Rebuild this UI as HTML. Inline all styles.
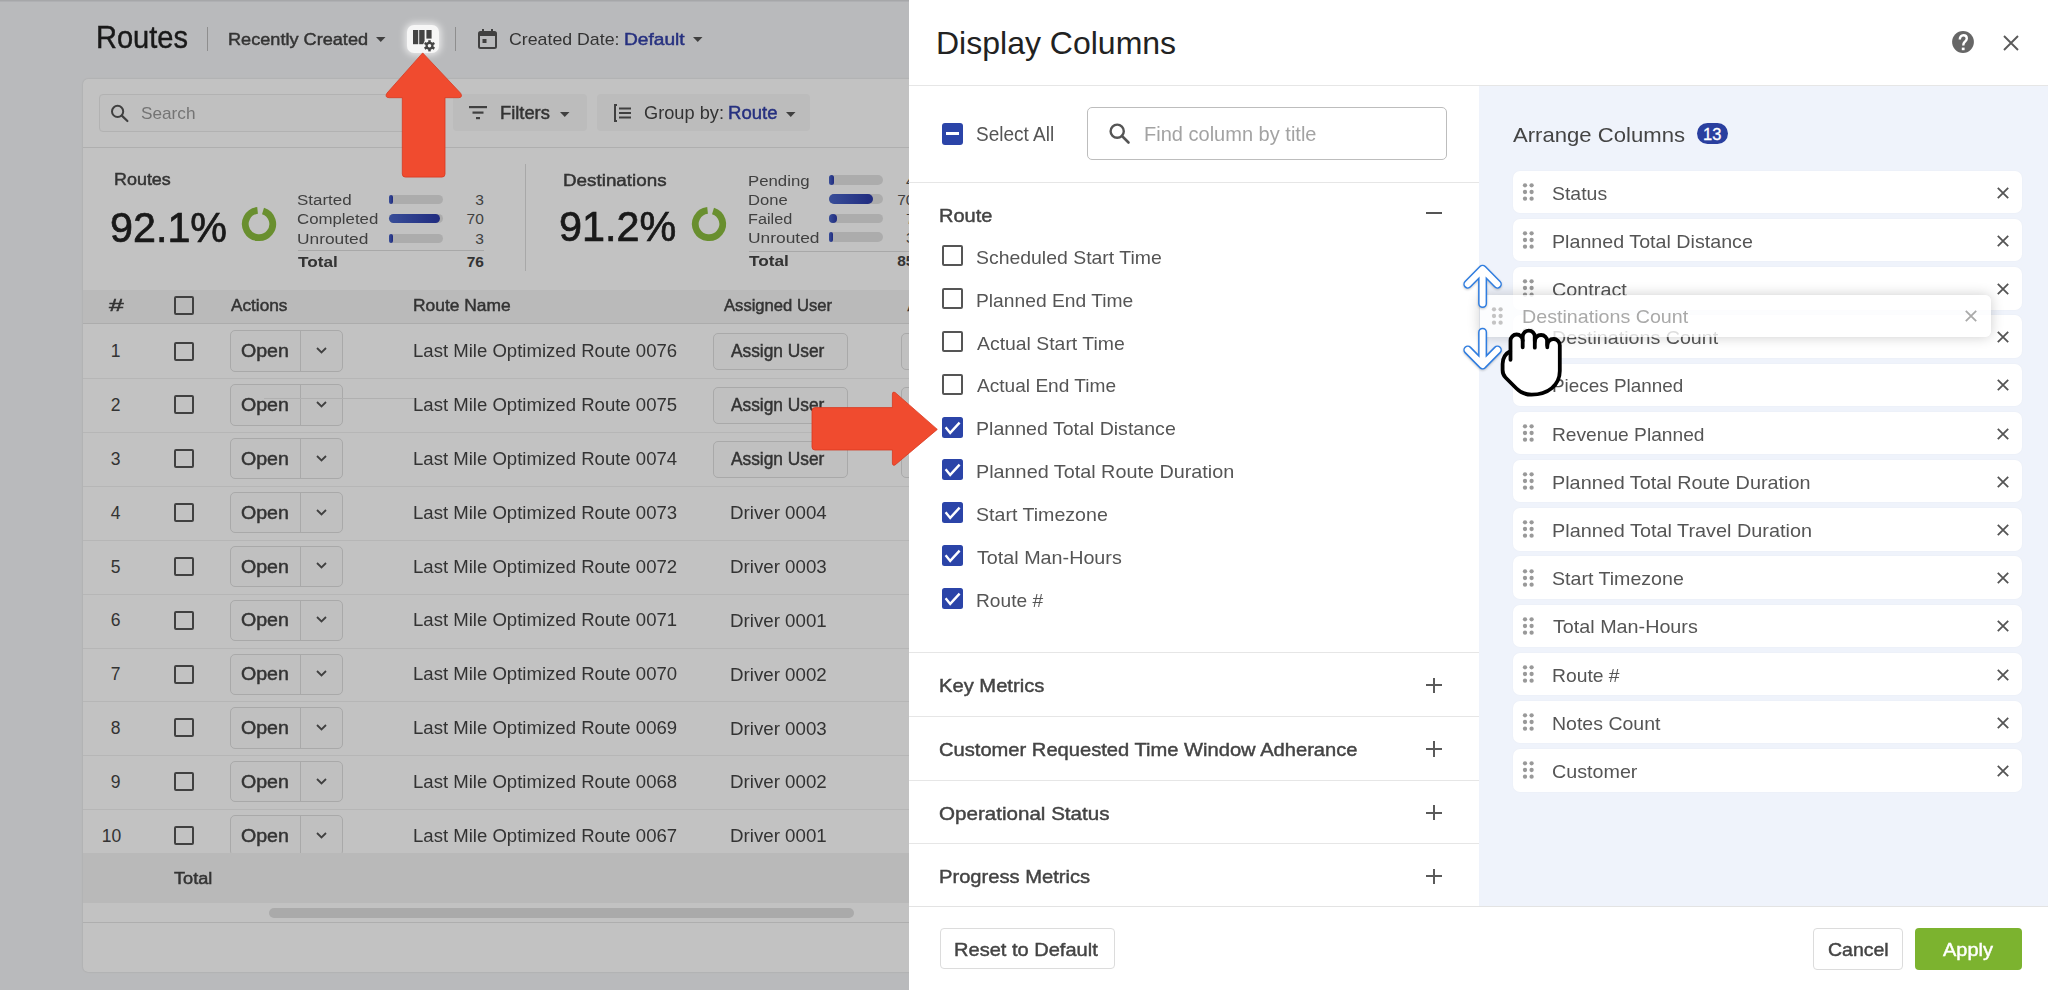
<!DOCTYPE html>
<html><head><meta charset="utf-8"><style>
html,body{margin:0;padding:0;width:2048px;height:990px;overflow:hidden;background:#fff}
body{position:relative;font-family:"Liberation Sans",sans-serif}
.t{position:absolute;white-space:pre;line-height:1;font-family:"Liberation Sans",sans-serif}
</style></head><body>
<div style="position:absolute;left:0.00px;top:0.00px;width:909.00px;height:990.00px;background:#f4f5f7"></div>
<div style="position:absolute;left:0.00px;top:0.00px;width:909.00px;height:2.00px;background:linear-gradient(#d5d6d9,#eceef1)"></div>
<div class="t" style="left:95.60px;top:22.18px;font-size:30.5px;color:#222;font-weight:400;transform:scaleX(0.9521);transform-origin:left 50%;-webkit-text-stroke:0.4px #222;">Routes</div>
<div style="position:absolute;left:207.00px;top:27.00px;width:1.00px;height:24.00px;background:#bbb"></div>
<div class="t" style="left:227.73px;top:30.91px;font-size:17px;color:#444;-webkit-text-stroke:0.45px #444;transform:scaleX(1.0662);transform-origin:left 50%;">Recently Created</div>
<svg style="position:absolute;left:376.00px;top:37.00px;overflow:visible;" width="10" height="5" viewBox="0 0 10 5"><path d="M0 0 L9.5 0 L4.75 5 Z" fill="#555"/></svg>
<div style="position:absolute;left:455.00px;top:27.00px;width:1.00px;height:24.00px;background:#bbb"></div>
<svg style="position:absolute;left:478.00px;top:27.50px;overflow:visible;" width="19" height="21" viewBox="0 0 19 21"><rect x="1" y="4" width="17" height="16" rx="1.5" fill="none" stroke="#555" stroke-width="2"/><rect x="1" y="4" width="17" height="4" fill="#555"/><rect x="4" y="1" width="2" height="4" fill="#555"/><rect x="13" y="1" width="2" height="4" fill="#555"/><rect x="4.5" y="11" width="4" height="4" fill="#555"/></svg>
<div class="t" style="left:509.46px;top:31.11px;font-size:17px;color:#444;font-weight:400;transform:scaleX(1.0437);transform-origin:left 50%;">Created Date:</div>
<div class="t" style="left:623.87px;top:31.11px;font-size:17px;color:#3340a8;-webkit-text-stroke:0.45px #3340a8;transform:scaleX(1.1264);transform-origin:left 50%;">Default</div>
<svg style="position:absolute;left:692.50px;top:37.00px;overflow:visible;" width="10" height="5" viewBox="0 0 10 5"><path d="M0 0 L9.5 0 L4.75 5 Z" fill="#555"/></svg>
<div style="position:absolute;left:83.00px;top:79.00px;width:900.00px;height:893.00px;background:#fff;border-radius:5px;box-shadow:0 0 2px rgba(0,0,0,0.15)"></div>
<div style="position:absolute;left:99.00px;top:93.50px;width:346.00px;height:38.50px;background:#fdfdfd;border:1px solid #eaeaea;border-radius:4px;box-sizing:border-box"></div>
<svg style="position:absolute;left:110.00px;top:104.00px;overflow:visible;" width="20" height="18" viewBox="0 0 20 18"><circle cx="7.6" cy="7.4" r="5.6" fill="none" stroke="#555" stroke-width="2"/><path d="M11.8 11.6 L17.4 17" stroke="#555" stroke-width="2.2" stroke-linecap="round"/></svg>
<div class="t" style="left:141.39px;top:104.81px;font-size:17px;color:#999;font-weight:400;transform:scaleX(1.0115);transform-origin:left 50%;">Search</div>
<div style="position:absolute;left:453.00px;top:94.00px;width:134.00px;height:37.00px;background:#f8f8f8;border-radius:4px"></div>
<svg style="position:absolute;left:469.00px;top:106.00px;overflow:visible;" width="19" height="14" viewBox="0 0 19 14"><rect x="0" y="0" width="18" height="2.2" fill="#555"/><rect x="3.5" y="5.5" width="11" height="2.2" fill="#555"/><rect x="7" y="11" width="4" height="2.2" fill="#555"/></svg>
<div class="t" style="left:500.25px;top:104.99px;font-size:17.5px;color:#444;-webkit-text-stroke:0.45px #444;transform:scaleX(1.0468);transform-origin:left 50%;">Filters</div>
<svg style="position:absolute;left:559.50px;top:111.50px;overflow:visible;" width="10" height="5" viewBox="0 0 10 5"><path d="M0 0 L9.5 0 L4.75 5 Z" fill="#555"/></svg>
<div style="position:absolute;left:597.00px;top:94.00px;width:213.00px;height:37.00px;background:#f8f8f8;border-radius:4px"></div>
<svg style="position:absolute;left:613.50px;top:103.50px;overflow:visible;" width="18" height="18" viewBox="0 0 18 18"><path d="M3 1 L1 1 L1 17 L3 17" fill="none" stroke="#555" stroke-width="2"/><rect x="5" y="3.5" width="12" height="2" fill="#555"/><rect x="5" y="8" width="12" height="2" fill="#555"/><rect x="5" y="12.5" width="12" height="2" fill="#555"/></svg>
<div class="t" style="left:644.26px;top:104.99px;font-size:17.5px;color:#444;font-weight:400;transform:scaleX(1.0405);transform-origin:left 50%;">Group by:</div>
<div class="t" style="left:727.94px;top:104.99px;font-size:17.5px;color:#3340a8;-webkit-text-stroke:0.45px #3340a8;transform:scaleX(1.0600);transform-origin:left 50%;">Route</div>
<svg style="position:absolute;left:785.50px;top:111.50px;overflow:visible;" width="10" height="5" viewBox="0 0 10 5"><path d="M0 0 L9.5 0 L4.75 5 Z" fill="#555"/></svg>
<div style="position:absolute;left:83.00px;top:147.00px;width:826.00px;height:1.00px;background:#e6e6e6"></div>
<div class="t" style="left:113.51px;top:171.03px;font-size:16.5px;color:#444;-webkit-text-stroke:0.45px #444;transform:scaleX(1.0863);transform-origin:left 50%;">Routes</div>
<div class="t" style="left:109.83px;top:206.85px;font-size:42px;color:#222;font-weight:400;transform:scaleX(0.9828);transform-origin:left 50%;-webkit-text-stroke:0.7px #222;">92.1%</div>
<svg style="position:absolute;left:239.30px;top:204.30px;overflow:visible;" width="40" height="40" viewBox="0 0 40 40"><path d="M24.01 6.90 A13.7 13.7 0 1 1 18.57 6.38" fill="none" stroke="#8bbd3f" stroke-width="6.8"/></svg>
<div class="t" style="left:296.91px;top:191.88px;font-size:15.5px;color:#555;font-weight:400;transform:scaleX(1.0938);transform-origin:left 50%;">Started</div>
<div style="position:absolute;left:389.00px;top:194.80px;width:53.60px;height:9.20px;background:#e3e3e3;border-radius:5px"></div>
<div style="position:absolute;left:389.00px;top:194.80px;width:3.60px;height:9.20px;background:linear-gradient(90deg,#4a66c8,#2b3aa8);border-radius:5px"></div>
<div class="t" style="right:1564.20px;top:191.88px;font-size:15.5px;color:#555;font-weight:400;">3</div>
<div class="t" style="left:296.92px;top:211.38px;font-size:15.5px;color:#555;font-weight:400;transform:scaleX(1.0849);transform-origin:left 50%;">Completed</div>
<div style="position:absolute;left:389.00px;top:214.30px;width:53.60px;height:9.20px;background:#e3e3e3;border-radius:5px"></div>
<div style="position:absolute;left:389.00px;top:214.30px;width:51.19px;height:9.20px;background:linear-gradient(90deg,#4a66c8,#2b3aa8);border-radius:5px"></div>
<div class="t" style="right:1564.20px;top:211.38px;font-size:15.5px;color:#555;font-weight:400;">70</div>
<div class="t" style="left:296.88px;top:230.88px;font-size:15.5px;color:#555;font-weight:400;transform:scaleX(1.1194);transform-origin:left 50%;">Unrouted</div>
<div style="position:absolute;left:389.00px;top:233.80px;width:53.60px;height:9.20px;background:#e3e3e3;border-radius:5px"></div>
<div style="position:absolute;left:389.00px;top:233.80px;width:3.60px;height:9.20px;background:linear-gradient(90deg,#4a66c8,#2b3aa8);border-radius:5px"></div>
<div class="t" style="right:1564.20px;top:230.88px;font-size:15.5px;color:#555;font-weight:400;">3</div>
<div style="position:absolute;left:298.00px;top:250.00px;width:186.00px;height:1.00px;background:#ddd"></div>
<div class="t" style="left:298.00px;top:253.88px;font-size:15.5px;color:#444;font-weight:700;transform:scaleX(1.1114);transform-origin:left 50%;">Total</div>
<div class="t" style="right:1564.00px;top:253.88px;font-size:15.5px;color:#444;font-weight:700;">76</div>
<div style="position:absolute;left:524.50px;top:164.00px;width:1.00px;height:107.00px;background:#ddd"></div>
<div class="t" style="left:563.36px;top:171.63px;font-size:16.5px;color:#444;-webkit-text-stroke:0.45px #444;transform:scaleX(1.1411);transform-origin:left 50%;">Destinations</div>
<div class="t" style="left:559.03px;top:206.15px;font-size:42px;color:#222;font-weight:400;transform:scaleX(0.9845);transform-origin:left 50%;-webkit-text-stroke:0.7px #222;">91.2%</div>
<svg style="position:absolute;left:688.70px;top:204.30px;overflow:visible;" width="40" height="40" viewBox="0 0 40 40"><path d="M24.01 6.90 A13.7 13.7 0 1 1 18.57 6.38" fill="none" stroke="#8bbd3f" stroke-width="6.8"/></svg>
<div class="t" style="left:747.72px;top:172.88px;font-size:15.5px;color:#555;font-weight:400;transform:scaleX(1.0818);transform-origin:left 50%;">Pending</div>
<div style="position:absolute;left:829.30px;top:175.40px;width:53.50px;height:9.20px;background:#e3e3e3;border-radius:5px"></div>
<div style="position:absolute;left:829.30px;top:175.40px;width:5.08px;height:9.20px;background:linear-gradient(90deg,#4a66c8,#2b3aa8);border-radius:5px"></div>
<div class="t" style="right:1133.50px;top:172.88px;font-size:15.5px;color:#555;font-weight:400;">4</div>
<div class="t" style="left:747.73px;top:191.88px;font-size:15.5px;color:#555;font-weight:400;transform:scaleX(1.0694);transform-origin:left 50%;">Done</div>
<div style="position:absolute;left:829.30px;top:194.40px;width:53.50px;height:9.20px;background:#e3e3e3;border-radius:5px"></div>
<div style="position:absolute;left:829.30px;top:194.40px;width:44.14px;height:9.20px;background:linear-gradient(90deg,#4a66c8,#2b3aa8);border-radius:5px"></div>
<div class="t" style="right:1133.50px;top:191.88px;font-size:15.5px;color:#555;font-weight:400;">70</div>
<div class="t" style="left:747.75px;top:211.38px;font-size:15.5px;color:#555;font-weight:400;transform:scaleX(1.0475);transform-origin:left 50%;">Failed</div>
<div style="position:absolute;left:829.30px;top:213.90px;width:53.50px;height:9.20px;background:#e3e3e3;border-radius:5px"></div>
<div style="position:absolute;left:829.30px;top:213.90px;width:7.76px;height:9.20px;background:linear-gradient(90deg,#4a66c8,#2b3aa8);border-radius:5px"></div>
<div class="t" style="right:1133.50px;top:211.38px;font-size:15.5px;color:#555;font-weight:400;">7</div>
<div class="t" style="left:747.68px;top:229.88px;font-size:15.5px;color:#555;font-weight:400;transform:scaleX(1.1210);transform-origin:left 50%;">Unrouted</div>
<div style="position:absolute;left:829.30px;top:232.40px;width:53.50px;height:9.20px;background:#e3e3e3;border-radius:5px"></div>
<div style="position:absolute;left:829.30px;top:232.40px;width:3.60px;height:9.20px;background:linear-gradient(90deg,#4a66c8,#2b3aa8);border-radius:5px"></div>
<div class="t" style="right:1133.50px;top:229.88px;font-size:15.5px;color:#555;font-weight:400;">3</div>
<div style="position:absolute;left:748.80px;top:250.50px;width:170.00px;height:1.00px;background:#ddd"></div>
<div class="t" style="left:748.80px;top:252.88px;font-size:15.5px;color:#444;font-weight:700;transform:scaleX(1.1114);transform-origin:left 50%;">Total</div>
<div class="t" style="right:1133.50px;top:252.88px;font-size:15.5px;color:#444;font-weight:700;">85</div>
<div style="position:absolute;left:83.00px;top:290.00px;width:826.00px;height:33.00px;background:#f5f5f5;border-bottom:1px solid #e3e3e3"></div>
<div class="t" style="left:109.00px;top:296.61px;font-size:17px;color:#444;-webkit-text-stroke:0.45px #444;transform:scaleX(1.5500);transform-origin:left 50%;">#</div>
<div style="position:absolute;left:174.00px;top:295.50px;width:19.50px;height:19.00px;border:2px solid #555;border-radius:2px;box-sizing:border-box"></div>
<div class="t" style="left:230.70px;top:296.73px;font-size:16.5px;color:#444;-webkit-text-stroke:0.45px #444;transform:scaleX(1.0426);transform-origin:left 50%;">Actions</div>
<div class="t" style="left:412.95px;top:296.73px;font-size:16.5px;color:#444;-webkit-text-stroke:0.45px #444;transform:scaleX(1.0538);transform-origin:left 50%;">Route Name</div>
<div class="t" style="left:724.30px;top:296.73px;font-size:16.5px;color:#444;-webkit-text-stroke:0.45px #444;transform:scaleX(1.0065);transform-origin:left 50%;">Assigned User</div>
<div class="t" style="left:907.50px;top:296.73px;font-size:16.5px;color:#444;-webkit-text-stroke:0.45px #444;">A</div>
<div style="position:absolute;left:83.00px;top:378.30px;width:826.00px;height:1.00px;background:#efefef"></div>
<div class="t" style="left:115.50px;top:343.19px;font-size:17.5px;color:#444;font-weight:400;transform:translateX(-50%) scaleX(1.0000);transform-origin:0 50%;">1</div>
<div style="position:absolute;left:174.00px;top:341.50px;width:19.50px;height:19.00px;border:2px solid #555;border-radius:2px;box-sizing:border-box"></div>
<div style="position:absolute;left:230.30px;top:330.40px;width:113.00px;height:41.30px;border:1px solid #dedede;border-radius:5px;box-sizing:border-box;background:#fdfdfd"></div>
<div style="position:absolute;left:299.50px;top:330.40px;width:1.00px;height:41.30px;background:#dedede"></div>
<div class="t" style="left:240.80px;top:343.19px;font-size:17.5px;color:#444;-webkit-text-stroke:0.45px #444;transform:scaleX(1.1190);transform-origin:left 50%;">Open</div>
<svg style="position:absolute;left:315.50px;top:347.00px;overflow:visible;" width="11" height="7" viewBox="0 0 11 7"><path d="M1 1 L5.5 5.5 L10 1" fill="none" stroke="#555" stroke-width="1.8"/></svg>
<div class="t" style="left:412.94px;top:343.19px;font-size:17.5px;color:#444;font-weight:400;transform:scaleX(1.0607);transform-origin:left 50%;">Last Mile Optimized Route 0076</div>
<div style="position:absolute;left:712.60px;top:333.00px;width:135.60px;height:37.00px;border:1px solid #dedede;border-radius:5px;box-sizing:border-box;background:#fdfdfd"></div>
<div class="t" style="left:731.00px;top:343.19px;font-size:17.5px;color:#444;-webkit-text-stroke:0.45px #444;transform:scaleX(0.9895);transform-origin:left 50%;">Assign User</div>
<div style="position:absolute;left:901.00px;top:333.00px;width:20.00px;height:37.00px;border:1px solid #dedede;border-radius:5px;box-sizing:border-box;background:#fdfdfd"></div>
<div style="position:absolute;left:83.00px;top:432.15px;width:826.00px;height:1.00px;background:#efefef"></div>
<div class="t" style="left:115.50px;top:397.04px;font-size:17.5px;color:#444;font-weight:400;transform:translateX(-50%) scaleX(1.0000);transform-origin:0 50%;">2</div>
<div style="position:absolute;left:174.00px;top:395.35px;width:19.50px;height:19.00px;border:2px solid #555;border-radius:2px;box-sizing:border-box"></div>
<div style="position:absolute;left:230.30px;top:384.25px;width:113.00px;height:41.30px;border:1px solid #dedede;border-radius:5px;box-sizing:border-box;background:#fdfdfd"></div>
<div style="position:absolute;left:299.50px;top:384.25px;width:1.00px;height:41.30px;background:#dedede"></div>
<div class="t" style="left:240.80px;top:397.04px;font-size:17.5px;color:#444;-webkit-text-stroke:0.45px #444;transform:scaleX(1.1190);transform-origin:left 50%;">Open</div>
<svg style="position:absolute;left:315.50px;top:400.85px;overflow:visible;" width="11" height="7" viewBox="0 0 11 7"><path d="M1 1 L5.5 5.5 L10 1" fill="none" stroke="#555" stroke-width="1.8"/></svg>
<div class="t" style="left:412.94px;top:397.04px;font-size:17.5px;color:#444;font-weight:400;transform:scaleX(1.0607);transform-origin:left 50%;">Last Mile Optimized Route 0075</div>
<div style="position:absolute;left:712.60px;top:386.85px;width:135.60px;height:37.00px;border:1px solid #dedede;border-radius:5px;box-sizing:border-box;background:#fdfdfd"></div>
<div class="t" style="left:731.00px;top:397.04px;font-size:17.5px;color:#444;-webkit-text-stroke:0.45px #444;transform:scaleX(0.9895);transform-origin:left 50%;">Assign User</div>
<div style="position:absolute;left:901.00px;top:386.85px;width:20.00px;height:37.00px;border:1px solid #dedede;border-radius:5px;box-sizing:border-box;background:#fdfdfd"></div>
<div style="position:absolute;left:83.00px;top:486.00px;width:826.00px;height:1.00px;background:#efefef"></div>
<div class="t" style="left:115.50px;top:450.89px;font-size:17.5px;color:#444;font-weight:400;transform:translateX(-50%) scaleX(1.0000);transform-origin:0 50%;">3</div>
<div style="position:absolute;left:174.00px;top:449.20px;width:19.50px;height:19.00px;border:2px solid #555;border-radius:2px;box-sizing:border-box"></div>
<div style="position:absolute;left:230.30px;top:438.10px;width:113.00px;height:41.30px;border:1px solid #dedede;border-radius:5px;box-sizing:border-box;background:#fdfdfd"></div>
<div style="position:absolute;left:299.50px;top:438.10px;width:1.00px;height:41.30px;background:#dedede"></div>
<div class="t" style="left:240.80px;top:450.89px;font-size:17.5px;color:#444;-webkit-text-stroke:0.45px #444;transform:scaleX(1.1190);transform-origin:left 50%;">Open</div>
<svg style="position:absolute;left:315.50px;top:454.70px;overflow:visible;" width="11" height="7" viewBox="0 0 11 7"><path d="M1 1 L5.5 5.5 L10 1" fill="none" stroke="#555" stroke-width="1.8"/></svg>
<div class="t" style="left:412.94px;top:450.89px;font-size:17.5px;color:#444;font-weight:400;transform:scaleX(1.0607);transform-origin:left 50%;">Last Mile Optimized Route 0074</div>
<div style="position:absolute;left:712.60px;top:440.70px;width:135.60px;height:37.00px;border:1px solid #dedede;border-radius:5px;box-sizing:border-box;background:#fdfdfd"></div>
<div class="t" style="left:731.00px;top:450.89px;font-size:17.5px;color:#444;-webkit-text-stroke:0.45px #444;transform:scaleX(0.9895);transform-origin:left 50%;">Assign User</div>
<div style="position:absolute;left:901.00px;top:440.70px;width:20.00px;height:37.00px;border:1px solid #dedede;border-radius:5px;box-sizing:border-box;background:#fdfdfd"></div>
<div style="position:absolute;left:83.00px;top:539.85px;width:826.00px;height:1.00px;background:#efefef"></div>
<div class="t" style="left:115.50px;top:504.74px;font-size:17.5px;color:#444;font-weight:400;transform:translateX(-50%) scaleX(1.0000);transform-origin:0 50%;">4</div>
<div style="position:absolute;left:174.00px;top:503.05px;width:19.50px;height:19.00px;border:2px solid #555;border-radius:2px;box-sizing:border-box"></div>
<div style="position:absolute;left:230.30px;top:491.95px;width:113.00px;height:41.30px;border:1px solid #dedede;border-radius:5px;box-sizing:border-box;background:#fdfdfd"></div>
<div style="position:absolute;left:299.50px;top:491.95px;width:1.00px;height:41.30px;background:#dedede"></div>
<div class="t" style="left:240.80px;top:504.74px;font-size:17.5px;color:#444;-webkit-text-stroke:0.45px #444;transform:scaleX(1.1190);transform-origin:left 50%;">Open</div>
<svg style="position:absolute;left:315.50px;top:508.55px;overflow:visible;" width="11" height="7" viewBox="0 0 11 7"><path d="M1 1 L5.5 5.5 L10 1" fill="none" stroke="#555" stroke-width="1.8"/></svg>
<div class="t" style="left:412.94px;top:504.74px;font-size:17.5px;color:#444;font-weight:400;transform:scaleX(1.0607);transform-origin:left 50%;">Last Mile Optimized Route 0073</div>
<div class="t" style="left:730.13px;top:505.24px;font-size:17.5px;color:#444;font-weight:400;transform:scaleX(1.0697);transform-origin:left 50%;">Driver 0004</div>
<div style="position:absolute;left:83.00px;top:593.70px;width:826.00px;height:1.00px;background:#efefef"></div>
<div class="t" style="left:115.50px;top:558.59px;font-size:17.5px;color:#444;font-weight:400;transform:translateX(-50%) scaleX(1.0000);transform-origin:0 50%;">5</div>
<div style="position:absolute;left:174.00px;top:556.90px;width:19.50px;height:19.00px;border:2px solid #555;border-radius:2px;box-sizing:border-box"></div>
<div style="position:absolute;left:230.30px;top:545.80px;width:113.00px;height:41.30px;border:1px solid #dedede;border-radius:5px;box-sizing:border-box;background:#fdfdfd"></div>
<div style="position:absolute;left:299.50px;top:545.80px;width:1.00px;height:41.30px;background:#dedede"></div>
<div class="t" style="left:240.80px;top:558.59px;font-size:17.5px;color:#444;-webkit-text-stroke:0.45px #444;transform:scaleX(1.1190);transform-origin:left 50%;">Open</div>
<svg style="position:absolute;left:315.50px;top:562.40px;overflow:visible;" width="11" height="7" viewBox="0 0 11 7"><path d="M1 1 L5.5 5.5 L10 1" fill="none" stroke="#555" stroke-width="1.8"/></svg>
<div class="t" style="left:412.94px;top:558.59px;font-size:17.5px;color:#444;font-weight:400;transform:scaleX(1.0607);transform-origin:left 50%;">Last Mile Optimized Route 0072</div>
<div class="t" style="left:730.13px;top:559.09px;font-size:17.5px;color:#444;font-weight:400;transform:scaleX(1.0697);transform-origin:left 50%;">Driver 0003</div>
<div style="position:absolute;left:83.00px;top:647.55px;width:826.00px;height:1.00px;background:#efefef"></div>
<div class="t" style="left:115.50px;top:612.44px;font-size:17.5px;color:#444;font-weight:400;transform:translateX(-50%) scaleX(1.0000);transform-origin:0 50%;">6</div>
<div style="position:absolute;left:174.00px;top:610.75px;width:19.50px;height:19.00px;border:2px solid #555;border-radius:2px;box-sizing:border-box"></div>
<div style="position:absolute;left:230.30px;top:599.65px;width:113.00px;height:41.30px;border:1px solid #dedede;border-radius:5px;box-sizing:border-box;background:#fdfdfd"></div>
<div style="position:absolute;left:299.50px;top:599.65px;width:1.00px;height:41.30px;background:#dedede"></div>
<div class="t" style="left:240.80px;top:612.44px;font-size:17.5px;color:#444;-webkit-text-stroke:0.45px #444;transform:scaleX(1.1190);transform-origin:left 50%;">Open</div>
<svg style="position:absolute;left:315.50px;top:616.25px;overflow:visible;" width="11" height="7" viewBox="0 0 11 7"><path d="M1 1 L5.5 5.5 L10 1" fill="none" stroke="#555" stroke-width="1.8"/></svg>
<div class="t" style="left:412.94px;top:612.44px;font-size:17.5px;color:#444;font-weight:400;transform:scaleX(1.0607);transform-origin:left 50%;">Last Mile Optimized Route 0071</div>
<div class="t" style="left:730.13px;top:612.94px;font-size:17.5px;color:#444;font-weight:400;transform:scaleX(1.0697);transform-origin:left 50%;">Driver 0001</div>
<div style="position:absolute;left:83.00px;top:701.40px;width:826.00px;height:1.00px;background:#efefef"></div>
<div class="t" style="left:115.50px;top:666.29px;font-size:17.5px;color:#444;font-weight:400;transform:translateX(-50%) scaleX(1.0000);transform-origin:0 50%;">7</div>
<div style="position:absolute;left:174.00px;top:664.60px;width:19.50px;height:19.00px;border:2px solid #555;border-radius:2px;box-sizing:border-box"></div>
<div style="position:absolute;left:230.30px;top:653.50px;width:113.00px;height:41.30px;border:1px solid #dedede;border-radius:5px;box-sizing:border-box;background:#fdfdfd"></div>
<div style="position:absolute;left:299.50px;top:653.50px;width:1.00px;height:41.30px;background:#dedede"></div>
<div class="t" style="left:240.80px;top:666.29px;font-size:17.5px;color:#444;-webkit-text-stroke:0.45px #444;transform:scaleX(1.1190);transform-origin:left 50%;">Open</div>
<svg style="position:absolute;left:315.50px;top:670.10px;overflow:visible;" width="11" height="7" viewBox="0 0 11 7"><path d="M1 1 L5.5 5.5 L10 1" fill="none" stroke="#555" stroke-width="1.8"/></svg>
<div class="t" style="left:412.94px;top:666.29px;font-size:17.5px;color:#444;font-weight:400;transform:scaleX(1.0607);transform-origin:left 50%;">Last Mile Optimized Route 0070</div>
<div class="t" style="left:730.13px;top:666.79px;font-size:17.5px;color:#444;font-weight:400;transform:scaleX(1.0697);transform-origin:left 50%;">Driver 0002</div>
<div style="position:absolute;left:83.00px;top:755.25px;width:826.00px;height:1.00px;background:#efefef"></div>
<div class="t" style="left:115.50px;top:720.14px;font-size:17.5px;color:#444;font-weight:400;transform:translateX(-50%) scaleX(1.0000);transform-origin:0 50%;">8</div>
<div style="position:absolute;left:174.00px;top:718.45px;width:19.50px;height:19.00px;border:2px solid #555;border-radius:2px;box-sizing:border-box"></div>
<div style="position:absolute;left:230.30px;top:707.35px;width:113.00px;height:41.30px;border:1px solid #dedede;border-radius:5px;box-sizing:border-box;background:#fdfdfd"></div>
<div style="position:absolute;left:299.50px;top:707.35px;width:1.00px;height:41.30px;background:#dedede"></div>
<div class="t" style="left:240.80px;top:720.14px;font-size:17.5px;color:#444;-webkit-text-stroke:0.45px #444;transform:scaleX(1.1190);transform-origin:left 50%;">Open</div>
<svg style="position:absolute;left:315.50px;top:723.95px;overflow:visible;" width="11" height="7" viewBox="0 0 11 7"><path d="M1 1 L5.5 5.5 L10 1" fill="none" stroke="#555" stroke-width="1.8"/></svg>
<div class="t" style="left:412.94px;top:720.14px;font-size:17.5px;color:#444;font-weight:400;transform:scaleX(1.0607);transform-origin:left 50%;">Last Mile Optimized Route 0069</div>
<div class="t" style="left:730.13px;top:720.64px;font-size:17.5px;color:#444;font-weight:400;transform:scaleX(1.0697);transform-origin:left 50%;">Driver 0003</div>
<div style="position:absolute;left:83.00px;top:809.10px;width:826.00px;height:1.00px;background:#efefef"></div>
<div class="t" style="left:115.50px;top:773.99px;font-size:17.5px;color:#444;font-weight:400;transform:translateX(-50%) scaleX(1.0000);transform-origin:0 50%;">9</div>
<div style="position:absolute;left:174.00px;top:772.30px;width:19.50px;height:19.00px;border:2px solid #555;border-radius:2px;box-sizing:border-box"></div>
<div style="position:absolute;left:230.30px;top:761.20px;width:113.00px;height:41.30px;border:1px solid #dedede;border-radius:5px;box-sizing:border-box;background:#fdfdfd"></div>
<div style="position:absolute;left:299.50px;top:761.20px;width:1.00px;height:41.30px;background:#dedede"></div>
<div class="t" style="left:240.80px;top:773.99px;font-size:17.5px;color:#444;-webkit-text-stroke:0.45px #444;transform:scaleX(1.1190);transform-origin:left 50%;">Open</div>
<svg style="position:absolute;left:315.50px;top:777.80px;overflow:visible;" width="11" height="7" viewBox="0 0 11 7"><path d="M1 1 L5.5 5.5 L10 1" fill="none" stroke="#555" stroke-width="1.8"/></svg>
<div class="t" style="left:412.94px;top:773.99px;font-size:17.5px;color:#444;font-weight:400;transform:scaleX(1.0607);transform-origin:left 50%;">Last Mile Optimized Route 0068</div>
<div class="t" style="left:730.13px;top:774.49px;font-size:17.5px;color:#444;font-weight:400;transform:scaleX(1.0697);transform-origin:left 50%;">Driver 0002</div>
<div style="position:absolute;left:83.00px;top:862.95px;width:826.00px;height:1.00px;background:#efefef"></div>
<div class="t" style="left:111.60px;top:827.84px;font-size:17.5px;color:#444;font-weight:400;transform:translateX(-50%) scaleX(1.0000);transform-origin:0 50%;">10</div>
<div style="position:absolute;left:174.00px;top:826.15px;width:19.50px;height:19.00px;border:2px solid #555;border-radius:2px;box-sizing:border-box"></div>
<div style="position:absolute;left:230.30px;top:815.05px;width:113.00px;height:41.30px;border:1px solid #dedede;border-radius:5px;box-sizing:border-box;background:#fdfdfd"></div>
<div style="position:absolute;left:299.50px;top:815.05px;width:1.00px;height:41.30px;background:#dedede"></div>
<div class="t" style="left:240.80px;top:827.84px;font-size:17.5px;color:#444;-webkit-text-stroke:0.45px #444;transform:scaleX(1.1190);transform-origin:left 50%;">Open</div>
<svg style="position:absolute;left:315.50px;top:831.65px;overflow:visible;" width="11" height="7" viewBox="0 0 11 7"><path d="M1 1 L5.5 5.5 L10 1" fill="none" stroke="#555" stroke-width="1.8"/></svg>
<div class="t" style="left:412.94px;top:827.84px;font-size:17.5px;color:#444;font-weight:400;transform:scaleX(1.0607);transform-origin:left 50%;">Last Mile Optimized Route 0067</div>
<div class="t" style="left:730.13px;top:828.34px;font-size:17.5px;color:#444;font-weight:400;transform:scaleX(1.0697);transform-origin:left 50%;">Driver 0001</div>
<div style="position:absolute;left:264.00px;top:398.00px;width:150.00px;height:1.00px;background:#e8e8e8"></div>
<div style="position:absolute;left:83.00px;top:853.00px;width:826.00px;height:50.00px;background:#f3f3f3"></div>
<div class="t" style="left:174.20px;top:870.96px;font-size:16px;color:#444;-webkit-text-stroke:0.45px #444;transform:scaleX(1.1333);transform-origin:left 50%;">Total</div>
<div style="position:absolute;left:269.00px;top:908.40px;width:584.50px;height:9.60px;background:#e0e0e0;border-radius:5px"></div>
<div style="position:absolute;left:83.00px;top:921.50px;width:826.00px;height:1.00px;background:#e5e5e5"></div>
<div style="position:absolute;left:0.00px;top:0.00px;width:909.00px;height:990.00px;background:rgba(0,0,0,0.24)"></div>
<div style="position:absolute;left:909.00px;top:0.00px;width:1139.00px;height:990.00px;background:#fff"></div>
<div class="t" style="left:936.00px;top:26.91px;font-size:32px;color:#222;font-weight:400;">Display Columns</div>
<svg style="position:absolute;left:1952.00px;top:31.20px;overflow:visible;" width="22" height="22" viewBox="0 0 22 22"><circle cx="11" cy="11" r="10.9" fill="#666"/><path d="M7.8 8.4 C7.8 5.9 9.4 4.3 11.4 4.3 C13.4 4.3 14.8 5.7 14.8 7.5 C14.8 9.3 13.5 10.1 12.5 11.1 C11.7 11.9 11.3 12.7 11.3 14.6" fill="none" stroke="#fff" stroke-width="2.4"/><rect x="9.8" y="16.6" width="2.8" height="2.6" fill="#fff"/></svg>
<svg style="position:absolute;left:2002.70px;top:34.70px;overflow:visible;" width="16" height="16" viewBox="0 0 16 16"><path d="M1 1 L15 15 M15 1 L1 15" stroke="#5a5a5a" stroke-width="1.9"/></svg>
<div style="position:absolute;left:909.00px;top:84.50px;width:1139.00px;height:1.00px;background:#e6e6e6"></div>
<div style="position:absolute;left:1479.00px;top:85.50px;width:569.00px;height:821.00px;background:#eff3fb"></div>
<div style="position:absolute;left:941.50px;top:123.00px;width:21.50px;height:21.50px;background:#2b44a8;border-radius:3px"></div>
<div style="position:absolute;left:946.00px;top:132.30px;width:12.50px;height:3.00px;background:#fff"></div>
<div class="t" style="left:976.03px;top:125.19px;font-size:19.5px;color:#555;font-weight:400;transform:scaleX(0.9744);transform-origin:left 50%;">Select All</div>
<div style="position:absolute;left:1086.60px;top:107.30px;width:360.20px;height:53.00px;border:1.3px solid #bdbdbd;border-radius:5px;box-sizing:border-box"></div>
<svg style="position:absolute;left:1109.00px;top:123.00px;overflow:visible;" width="22" height="21" viewBox="0 0 22 21"><circle cx="8.2" cy="8.2" r="6.6" fill="none" stroke="#555" stroke-width="2.4"/><path d="M13 13 L19.5 19.5" stroke="#555" stroke-width="2.6" stroke-linecap="round"/></svg>
<div class="t" style="left:1143.55px;top:125.19px;font-size:19.5px;color:#a3a3a3;font-weight:400;transform:scaleX(1.0267);transform-origin:left 50%;">Find column by title</div>
<div style="position:absolute;left:909.00px;top:182.00px;width:570.00px;height:1.00px;background:#e6e6e6"></div>
<div class="t" style="left:938.75px;top:205.52px;font-size:19px;color:#444;-webkit-text-stroke:0.45px #444;transform:scaleX(1.0531);transform-origin:left 50%;">Route</div>
<div style="position:absolute;left:1426.00px;top:212.00px;width:15.50px;height:2.00px;background:#555"></div>
<div style="position:absolute;left:942.00px;top:245.10px;width:20.50px;height:21.00px;border:2.2px solid #555;border-radius:2px;box-sizing:border-box"></div>
<div class="t" style="left:975.98px;top:247.82px;font-size:19px;color:#555;font-weight:400;transform:scaleX(1.0222);transform-origin:left 50%;">Scheduled Start Time</div>
<div style="position:absolute;left:942.00px;top:287.96px;width:20.50px;height:21.00px;border:2.2px solid #555;border-radius:2px;box-sizing:border-box"></div>
<div class="t" style="left:975.99px;top:290.68px;font-size:19px;color:#555;font-weight:400;transform:scaleX(1.0130);transform-origin:left 50%;">Planned End Time</div>
<div style="position:absolute;left:942.00px;top:330.82px;width:20.50px;height:21.00px;border:2.2px solid #555;border-radius:2px;box-sizing:border-box"></div>
<div class="t" style="left:977.00px;top:333.54px;font-size:19px;color:#555;font-weight:400;transform:scaleX(1.0208);transform-origin:left 50%;">Actual Start Time</div>
<div style="position:absolute;left:942.00px;top:373.68px;width:20.50px;height:21.00px;border:2.2px solid #555;border-radius:2px;box-sizing:border-box"></div>
<div class="t" style="left:977.00px;top:376.40px;font-size:19px;color:#555;font-weight:400;transform:scaleX(1.0051);transform-origin:left 50%;">Actual End Time</div>
<svg style="position:absolute;left:942.00px;top:416.54px;overflow:visible;" width="21" height="21" viewBox="0 0 21 21"><rect x="0" y="0" width="21" height="21" rx="2.5" fill="#2b44a8"/><path d="M3.6 10.3 L8.2 15.9 L17.6 5.6" fill="none" stroke="#fff" stroke-width="2.4"/></svg>
<div class="t" style="left:975.97px;top:419.26px;font-size:19px;color:#555;font-weight:400;transform:scaleX(1.0297);transform-origin:left 50%;">Planned Total Distance</div>
<svg style="position:absolute;left:942.00px;top:459.40px;overflow:visible;" width="21" height="21" viewBox="0 0 21 21"><rect x="0" y="0" width="21" height="21" rx="2.5" fill="#2b44a8"/><path d="M3.6 10.3 L8.2 15.9 L17.6 5.6" fill="none" stroke="#fff" stroke-width="2.4"/></svg>
<div class="t" style="left:975.96px;top:462.12px;font-size:19px;color:#555;font-weight:400;transform:scaleX(1.0419);transform-origin:left 50%;">Planned Total Route Duration</div>
<svg style="position:absolute;left:942.00px;top:502.26px;overflow:visible;" width="21" height="21" viewBox="0 0 21 21"><rect x="0" y="0" width="21" height="21" rx="2.5" fill="#2b44a8"/><path d="M3.6 10.3 L8.2 15.9 L17.6 5.6" fill="none" stroke="#fff" stroke-width="2.4"/></svg>
<div class="t" style="left:975.97px;top:504.98px;font-size:19px;color:#555;font-weight:400;transform:scaleX(1.0317);transform-origin:left 50%;">Start Timezone</div>
<svg style="position:absolute;left:942.00px;top:545.12px;overflow:visible;" width="21" height="21" viewBox="0 0 21 21"><rect x="0" y="0" width="21" height="21" rx="2.5" fill="#2b44a8"/><path d="M3.6 10.3 L8.2 15.9 L17.6 5.6" fill="none" stroke="#fff" stroke-width="2.4"/></svg>
<div class="t" style="left:977.00px;top:547.84px;font-size:19px;color:#555;font-weight:400;transform:scaleX(1.0388);transform-origin:left 50%;">Total Man-Hours</div>
<svg style="position:absolute;left:942.00px;top:587.98px;overflow:visible;" width="21" height="21" viewBox="0 0 21 21"><rect x="0" y="0" width="21" height="21" rx="2.5" fill="#2b44a8"/><path d="M3.6 10.3 L8.2 15.9 L17.6 5.6" fill="none" stroke="#fff" stroke-width="2.4"/></svg>
<div class="t" style="left:975.99px;top:590.70px;font-size:19px;color:#555;font-weight:400;transform:scaleX(1.0091);transform-origin:left 50%;">Route #</div>
<div style="position:absolute;left:909.00px;top:652.40px;width:570.00px;height:1.00px;background:#e6e6e6"></div>
<div class="t" style="left:938.54px;top:676.42px;font-size:19px;color:#444;-webkit-text-stroke:0.45px #444;transform:scaleX(1.0612);transform-origin:left 50%;">Key Metrics</div>
<div style="position:absolute;left:1426.00px;top:684.40px;width:15.50px;height:2.00px;background:#5a5a5a"></div>
<div style="position:absolute;left:1432.75px;top:677.65px;width:2.00px;height:15.50px;background:#5a5a5a"></div>
<div style="position:absolute;left:909.00px;top:716.00px;width:570.00px;height:1.00px;background:#e6e6e6"></div>
<div class="t" style="left:938.54px;top:740.02px;font-size:19px;color:#444;-webkit-text-stroke:0.45px #444;transform:scaleX(1.0596);transform-origin:left 50%;">Customer Requested Time Window Adherance</div>
<div style="position:absolute;left:1426.00px;top:748.00px;width:15.50px;height:2.00px;background:#5a5a5a"></div>
<div style="position:absolute;left:1432.75px;top:741.25px;width:2.00px;height:15.50px;background:#5a5a5a"></div>
<div style="position:absolute;left:909.00px;top:779.60px;width:570.00px;height:1.00px;background:#e6e6e6"></div>
<div class="t" style="left:938.52px;top:803.62px;font-size:19px;color:#444;-webkit-text-stroke:0.45px #444;transform:scaleX(1.0833);transform-origin:left 50%;">Operational Status</div>
<div style="position:absolute;left:1426.00px;top:811.60px;width:15.50px;height:2.00px;background:#5a5a5a"></div>
<div style="position:absolute;left:1432.75px;top:804.85px;width:2.00px;height:15.50px;background:#5a5a5a"></div>
<div style="position:absolute;left:909.00px;top:843.30px;width:570.00px;height:1.00px;background:#e6e6e6"></div>
<div class="t" style="left:938.54px;top:867.32px;font-size:19px;color:#444;-webkit-text-stroke:0.45px #444;transform:scaleX(1.0603);transform-origin:left 50%;">Progress Metrics</div>
<div style="position:absolute;left:1426.00px;top:875.30px;width:15.50px;height:2.00px;background:#5a5a5a"></div>
<div style="position:absolute;left:1432.75px;top:868.55px;width:2.00px;height:15.50px;background:#5a5a5a"></div>
<div style="position:absolute;left:909.00px;top:906.00px;width:1139.00px;height:1.00px;background:#e3e3e3"></div>
<div style="position:absolute;left:939.60px;top:928.00px;width:175.00px;height:41.40px;border:1px solid #dcdcdc;border-radius:4px;box-sizing:border-box"></div>
<div class="t" style="left:954.44px;top:940.22px;font-size:19px;color:#444;-webkit-text-stroke:0.45px #444;transform:scaleX(1.0551);transform-origin:left 50%;">Reset to Default</div>
<div style="position:absolute;left:1813.40px;top:928.40px;width:90.00px;height:41.60px;border:1px solid #dcdcdc;border-radius:4px;box-sizing:border-box"></div>
<div class="t" style="left:1828.47px;top:940.22px;font-size:19px;color:#444;-webkit-text-stroke:0.45px #444;transform:scaleX(1.0263);transform-origin:left 50%;">Cancel</div>
<div style="position:absolute;left:1915.20px;top:927.80px;width:106.60px;height:42.50px;background:#7cb32f;border-radius:4px"></div>
<div class="t" style="left:1943.20px;top:940.42px;font-size:19px;color:#fff;-webkit-text-stroke:0.45px #fff;transform:scaleX(1.0500);transform-origin:left 50%;">Apply</div>
<div class="t" style="left:1513.20px;top:123.92px;font-size:21px;color:#444;font-weight:400;transform:scaleX(1.0528);transform-origin:left 50%;">Arrange Columns</div>
<div style="position:absolute;left:1696.50px;top:123.20px;width:31.50px;height:21.00px;background:#2a3f9f;border-radius:11px"></div>
<div class="t" style="left:1712.20px;top:126.33px;font-size:16.5px;color:#fff;font-weight:400;transform:translateX(-50%) scaleX(1.0000);transform-origin:0 50%;-webkit-text-stroke:0.3px #fff;">13</div>
<div style="position:absolute;left:1513.20px;top:170.70px;width:508.60px;height:42.60px;background:#fff;border-radius:7px;box-shadow:0 0 2px rgba(0,0,0,0.04)"></div>
<svg style="position:absolute;left:1523.00px;top:182.00px;overflow:visible;" width="12" height="20" viewBox="0 0 12 20"><circle cx="2" cy="3.30" r="2.15" fill="#999"/><circle cx="2" cy="10.00" r="2.15" fill="#999"/><circle cx="2" cy="16.70" r="2.15" fill="#999"/><circle cx="8.6" cy="3.30" r="2.15" fill="#999"/><circle cx="8.6" cy="10.00" r="2.15" fill="#999"/><circle cx="8.6" cy="16.70" r="2.15" fill="#999"/></svg>
<div class="t" style="left:1552.18px;top:183.52px;font-size:19px;color:#555;font-weight:400;transform:scaleX(1.0231);transform-origin:left 50%;">Status</div>
<svg style="position:absolute;left:1997.00px;top:186.50px;overflow:visible;" width="12" height="12" viewBox="0 0 12 12"><path d="M0.8 0.8 L11.2 11.2 M11.2 0.8 L0.8 11.2" stroke="#555" stroke-width="1.8"/></svg>
<div style="position:absolute;left:1513.20px;top:218.90px;width:508.60px;height:42.60px;background:#fff;border-radius:7px;box-shadow:0 0 2px rgba(0,0,0,0.04)"></div>
<svg style="position:absolute;left:1523.00px;top:230.20px;overflow:visible;" width="12" height="20" viewBox="0 0 12 20"><circle cx="2" cy="3.30" r="2.15" fill="#999"/><circle cx="2" cy="10.00" r="2.15" fill="#999"/><circle cx="2" cy="16.70" r="2.15" fill="#999"/><circle cx="8.6" cy="3.30" r="2.15" fill="#999"/><circle cx="8.6" cy="10.00" r="2.15" fill="#999"/><circle cx="8.6" cy="16.70" r="2.15" fill="#999"/></svg>
<div class="t" style="left:1552.16px;top:231.72px;font-size:19px;color:#555;font-weight:400;transform:scaleX(1.0354);transform-origin:left 50%;">Planned Total Distance</div>
<svg style="position:absolute;left:1997.00px;top:234.70px;overflow:visible;" width="12" height="12" viewBox="0 0 12 12"><path d="M0.8 0.8 L11.2 11.2 M11.2 0.8 L0.8 11.2" stroke="#555" stroke-width="1.8"/></svg>
<div style="position:absolute;left:1513.20px;top:267.10px;width:508.60px;height:42.60px;background:#fff;border-radius:7px;box-shadow:0 0 2px rgba(0,0,0,0.04)"></div>
<svg style="position:absolute;left:1523.00px;top:278.40px;overflow:visible;" width="12" height="20" viewBox="0 0 12 20"><circle cx="2" cy="3.30" r="2.15" fill="#999"/><circle cx="2" cy="10.00" r="2.15" fill="#999"/><circle cx="2" cy="16.70" r="2.15" fill="#999"/><circle cx="8.6" cy="3.30" r="2.15" fill="#999"/><circle cx="8.6" cy="10.00" r="2.15" fill="#999"/><circle cx="8.6" cy="16.70" r="2.15" fill="#999"/></svg>
<div class="t" style="left:1552.16px;top:279.92px;font-size:19px;color:#555;font-weight:400;transform:scaleX(1.0423);transform-origin:left 50%;">Contract</div>
<svg style="position:absolute;left:1997.00px;top:282.90px;overflow:visible;" width="12" height="12" viewBox="0 0 12 12"><path d="M0.8 0.8 L11.2 11.2 M11.2 0.8 L0.8 11.2" stroke="#555" stroke-width="1.8"/></svg>
<div style="position:absolute;left:1513.20px;top:315.30px;width:508.60px;height:42.60px;background:#fff;border-radius:7px;box-shadow:0 0 2px rgba(0,0,0,0.04)"></div>
<svg style="position:absolute;left:1523.00px;top:326.60px;overflow:visible;" width="12" height="20" viewBox="0 0 12 20"><circle cx="2" cy="3.30" r="2.15" fill="#999"/><circle cx="2" cy="10.00" r="2.15" fill="#999"/><circle cx="2" cy="16.70" r="2.15" fill="#999"/><circle cx="8.6" cy="3.30" r="2.15" fill="#999"/><circle cx="8.6" cy="10.00" r="2.15" fill="#999"/><circle cx="8.6" cy="16.70" r="2.15" fill="#999"/></svg>
<div class="t" style="left:1552.16px;top:328.12px;font-size:19px;color:#555;font-weight:400;transform:scaleX(1.0350);transform-origin:left 50%;">Destinations Count</div>
<svg style="position:absolute;left:1997.00px;top:331.10px;overflow:visible;" width="12" height="12" viewBox="0 0 12 12"><path d="M0.8 0.8 L11.2 11.2 M11.2 0.8 L0.8 11.2" stroke="#555" stroke-width="1.8"/></svg>
<div style="position:absolute;left:1513.20px;top:363.50px;width:508.60px;height:42.60px;background:#fff;border-radius:7px;box-shadow:0 0 2px rgba(0,0,0,0.04)"></div>
<svg style="position:absolute;left:1523.00px;top:374.80px;overflow:visible;" width="12" height="20" viewBox="0 0 12 20"><circle cx="2" cy="3.30" r="2.15" fill="#999"/><circle cx="2" cy="10.00" r="2.15" fill="#999"/><circle cx="2" cy="16.70" r="2.15" fill="#999"/><circle cx="8.6" cy="3.30" r="2.15" fill="#999"/><circle cx="8.6" cy="10.00" r="2.15" fill="#999"/><circle cx="8.6" cy="16.70" r="2.15" fill="#999"/></svg>
<div class="t" style="left:1552.21px;top:376.32px;font-size:19px;color:#555;font-weight:400;transform:scaleX(0.9938);transform-origin:left 50%;">Pieces Planned</div>
<svg style="position:absolute;left:1997.00px;top:379.30px;overflow:visible;" width="12" height="12" viewBox="0 0 12 12"><path d="M0.8 0.8 L11.2 11.2 M11.2 0.8 L0.8 11.2" stroke="#555" stroke-width="1.8"/></svg>
<div style="position:absolute;left:1513.20px;top:411.70px;width:508.60px;height:42.60px;background:#fff;border-radius:7px;box-shadow:0 0 2px rgba(0,0,0,0.04)"></div>
<svg style="position:absolute;left:1523.00px;top:423.00px;overflow:visible;" width="12" height="20" viewBox="0 0 12 20"><circle cx="2" cy="3.30" r="2.15" fill="#999"/><circle cx="2" cy="10.00" r="2.15" fill="#999"/><circle cx="2" cy="16.70" r="2.15" fill="#999"/><circle cx="8.6" cy="3.30" r="2.15" fill="#999"/><circle cx="8.6" cy="10.00" r="2.15" fill="#999"/><circle cx="8.6" cy="16.70" r="2.15" fill="#999"/></svg>
<div class="t" style="left:1552.19px;top:424.52px;font-size:19px;color:#555;font-weight:400;transform:scaleX(1.0094);transform-origin:left 50%;">Revenue Planned</div>
<svg style="position:absolute;left:1997.00px;top:427.50px;overflow:visible;" width="12" height="12" viewBox="0 0 12 12"><path d="M0.8 0.8 L11.2 11.2 M11.2 0.8 L0.8 11.2" stroke="#555" stroke-width="1.8"/></svg>
<div style="position:absolute;left:1513.20px;top:459.90px;width:508.60px;height:42.60px;background:#fff;border-radius:7px;box-shadow:0 0 2px rgba(0,0,0,0.04)"></div>
<svg style="position:absolute;left:1523.00px;top:471.20px;overflow:visible;" width="12" height="20" viewBox="0 0 12 20"><circle cx="2" cy="3.30" r="2.15" fill="#999"/><circle cx="2" cy="10.00" r="2.15" fill="#999"/><circle cx="2" cy="16.70" r="2.15" fill="#999"/><circle cx="8.6" cy="3.30" r="2.15" fill="#999"/><circle cx="8.6" cy="10.00" r="2.15" fill="#999"/><circle cx="8.6" cy="16.70" r="2.15" fill="#999"/></svg>
<div class="t" style="left:1552.16px;top:472.72px;font-size:19px;color:#555;font-weight:400;transform:scaleX(1.0427);transform-origin:left 50%;">Planned Total Route Duration</div>
<svg style="position:absolute;left:1997.00px;top:475.70px;overflow:visible;" width="12" height="12" viewBox="0 0 12 12"><path d="M0.8 0.8 L11.2 11.2 M11.2 0.8 L0.8 11.2" stroke="#555" stroke-width="1.8"/></svg>
<div style="position:absolute;left:1513.20px;top:508.10px;width:508.60px;height:42.60px;background:#fff;border-radius:7px;box-shadow:0 0 2px rgba(0,0,0,0.04)"></div>
<svg style="position:absolute;left:1523.00px;top:519.40px;overflow:visible;" width="12" height="20" viewBox="0 0 12 20"><circle cx="2" cy="3.30" r="2.15" fill="#999"/><circle cx="2" cy="10.00" r="2.15" fill="#999"/><circle cx="2" cy="16.70" r="2.15" fill="#999"/><circle cx="8.6" cy="3.30" r="2.15" fill="#999"/><circle cx="8.6" cy="10.00" r="2.15" fill="#999"/><circle cx="8.6" cy="16.70" r="2.15" fill="#999"/></svg>
<div class="t" style="left:1552.16px;top:520.92px;font-size:19px;color:#555;font-weight:400;transform:scaleX(1.0445);transform-origin:left 50%;">Planned Total Travel Duration</div>
<svg style="position:absolute;left:1997.00px;top:523.90px;overflow:visible;" width="12" height="12" viewBox="0 0 12 12"><path d="M0.8 0.8 L11.2 11.2 M11.2 0.8 L0.8 11.2" stroke="#555" stroke-width="1.8"/></svg>
<div style="position:absolute;left:1513.20px;top:556.30px;width:508.60px;height:42.60px;background:#fff;border-radius:7px;box-shadow:0 0 2px rgba(0,0,0,0.04)"></div>
<svg style="position:absolute;left:1523.00px;top:567.60px;overflow:visible;" width="12" height="20" viewBox="0 0 12 20"><circle cx="2" cy="3.30" r="2.15" fill="#999"/><circle cx="2" cy="10.00" r="2.15" fill="#999"/><circle cx="2" cy="16.70" r="2.15" fill="#999"/><circle cx="8.6" cy="3.30" r="2.15" fill="#999"/><circle cx="8.6" cy="10.00" r="2.15" fill="#999"/><circle cx="8.6" cy="16.70" r="2.15" fill="#999"/></svg>
<div class="t" style="left:1552.17px;top:569.12px;font-size:19px;color:#555;font-weight:400;transform:scaleX(1.0317);transform-origin:left 50%;">Start Timezone</div>
<svg style="position:absolute;left:1997.00px;top:572.10px;overflow:visible;" width="12" height="12" viewBox="0 0 12 12"><path d="M0.8 0.8 L11.2 11.2 M11.2 0.8 L0.8 11.2" stroke="#555" stroke-width="1.8"/></svg>
<div style="position:absolute;left:1513.20px;top:604.50px;width:508.60px;height:42.60px;background:#fff;border-radius:7px;box-shadow:0 0 2px rgba(0,0,0,0.04)"></div>
<svg style="position:absolute;left:1523.00px;top:615.80px;overflow:visible;" width="12" height="20" viewBox="0 0 12 20"><circle cx="2" cy="3.30" r="2.15" fill="#999"/><circle cx="2" cy="10.00" r="2.15" fill="#999"/><circle cx="2" cy="16.70" r="2.15" fill="#999"/><circle cx="8.6" cy="3.30" r="2.15" fill="#999"/><circle cx="8.6" cy="10.00" r="2.15" fill="#999"/><circle cx="8.6" cy="16.70" r="2.15" fill="#999"/></svg>
<div class="t" style="left:1553.20px;top:617.32px;font-size:19px;color:#555;font-weight:400;transform:scaleX(1.0388);transform-origin:left 50%;">Total Man-Hours</div>
<svg style="position:absolute;left:1997.00px;top:620.30px;overflow:visible;" width="12" height="12" viewBox="0 0 12 12"><path d="M0.8 0.8 L11.2 11.2 M11.2 0.8 L0.8 11.2" stroke="#555" stroke-width="1.8"/></svg>
<div style="position:absolute;left:1513.20px;top:652.70px;width:508.60px;height:42.60px;background:#fff;border-radius:7px;box-shadow:0 0 2px rgba(0,0,0,0.04)"></div>
<svg style="position:absolute;left:1523.00px;top:664.00px;overflow:visible;" width="12" height="20" viewBox="0 0 12 20"><circle cx="2" cy="3.30" r="2.15" fill="#999"/><circle cx="2" cy="10.00" r="2.15" fill="#999"/><circle cx="2" cy="16.70" r="2.15" fill="#999"/><circle cx="8.6" cy="3.30" r="2.15" fill="#999"/><circle cx="8.6" cy="10.00" r="2.15" fill="#999"/><circle cx="8.6" cy="16.70" r="2.15" fill="#999"/></svg>
<div class="t" style="left:1552.18px;top:665.52px;font-size:19px;color:#555;font-weight:400;transform:scaleX(1.0152);transform-origin:left 50%;">Route #</div>
<svg style="position:absolute;left:1997.00px;top:668.50px;overflow:visible;" width="12" height="12" viewBox="0 0 12 12"><path d="M0.8 0.8 L11.2 11.2 M11.2 0.8 L0.8 11.2" stroke="#555" stroke-width="1.8"/></svg>
<div style="position:absolute;left:1513.20px;top:700.90px;width:508.60px;height:42.60px;background:#fff;border-radius:7px;box-shadow:0 0 2px rgba(0,0,0,0.04)"></div>
<svg style="position:absolute;left:1523.00px;top:712.20px;overflow:visible;" width="12" height="20" viewBox="0 0 12 20"><circle cx="2" cy="3.30" r="2.15" fill="#999"/><circle cx="2" cy="10.00" r="2.15" fill="#999"/><circle cx="2" cy="16.70" r="2.15" fill="#999"/><circle cx="8.6" cy="3.30" r="2.15" fill="#999"/><circle cx="8.6" cy="10.00" r="2.15" fill="#999"/><circle cx="8.6" cy="16.70" r="2.15" fill="#999"/></svg>
<div class="t" style="left:1552.17px;top:713.72px;font-size:19px;color:#555;font-weight:400;transform:scaleX(1.0267);transform-origin:left 50%;">Notes Count</div>
<svg style="position:absolute;left:1997.00px;top:716.70px;overflow:visible;" width="12" height="12" viewBox="0 0 12 12"><path d="M0.8 0.8 L11.2 11.2 M11.2 0.8 L0.8 11.2" stroke="#555" stroke-width="1.8"/></svg>
<div style="position:absolute;left:1513.20px;top:749.10px;width:508.60px;height:42.60px;background:#fff;border-radius:7px;box-shadow:0 0 2px rgba(0,0,0,0.04)"></div>
<svg style="position:absolute;left:1523.00px;top:760.40px;overflow:visible;" width="12" height="20" viewBox="0 0 12 20"><circle cx="2" cy="3.30" r="2.15" fill="#999"/><circle cx="2" cy="10.00" r="2.15" fill="#999"/><circle cx="2" cy="16.70" r="2.15" fill="#999"/><circle cx="8.6" cy="3.30" r="2.15" fill="#999"/><circle cx="8.6" cy="10.00" r="2.15" fill="#999"/><circle cx="8.6" cy="16.70" r="2.15" fill="#999"/></svg>
<div class="t" style="left:1552.16px;top:761.92px;font-size:19px;color:#555;font-weight:400;transform:scaleX(1.0370);transform-origin:left 50%;">Customer</div>
<svg style="position:absolute;left:1997.00px;top:764.90px;overflow:visible;" width="12" height="12" viewBox="0 0 12 12"><path d="M0.8 0.8 L11.2 11.2 M11.2 0.8 L0.8 11.2" stroke="#555" stroke-width="1.8"/></svg>
<div style="position:absolute;left:1480.30px;top:295.00px;width:510.70px;height:42.00px;background:rgba(255,255,255,0.8);border-radius:6px;box-shadow:0 0 13px rgba(0,0,0,0.2)"></div>
<svg style="position:absolute;left:1491.50px;top:306.00px;overflow:visible;" width="12" height="20" viewBox="0 0 12 20"><circle cx="2" cy="3.30" r="2.15" fill="#c4c4c4"/><circle cx="2" cy="10.00" r="2.15" fill="#c4c4c4"/><circle cx="2" cy="16.70" r="2.15" fill="#c4c4c4"/><circle cx="8.6" cy="3.30" r="2.15" fill="#c4c4c4"/><circle cx="8.6" cy="10.00" r="2.15" fill="#c4c4c4"/><circle cx="8.6" cy="16.70" r="2.15" fill="#c4c4c4"/></svg>
<div class="t" style="left:1521.66px;top:307.22px;font-size:19px;color:#a9a9a9;font-weight:400;transform:scaleX(1.0350);transform-origin:left 50%;">Destinations Count</div>
<svg style="position:absolute;left:1965.20px;top:310.40px;overflow:visible;" width="12" height="12" viewBox="0 0 12 12"><path d="M0.8 0.8 L11.2 11.2 M11.2 0.8 L0.8 11.2" stroke="#a9a9a9" stroke-width="1.8"/></svg>
<svg style="position:absolute;left:1450.00px;top:250.00px;overflow:visible;filter:drop-shadow(0 1px 1.2px rgba(0,0,0,0.22))" width="70" height="130" viewBox="0 0 70 130"><path d="M32.6 19.5 L32.6 53.5 M17.8 34.2 L32.6 19.2 L47.4 34.2" fill="none" stroke="#2f7de0" stroke-width="9" stroke-linecap="round" stroke-linejoin="round"/><path d="M32.6 19.5 L32.6 53.5 M17.8 34.2 L32.6 19.2 L47.4 34.2" fill="none" stroke="#fff" stroke-width="6" stroke-linecap="round" stroke-linejoin="round"/></svg>
<svg style="position:absolute;left:1450.00px;top:250.00px;overflow:visible;filter:drop-shadow(0 1px 1.2px rgba(0,0,0,0.22))" width="70" height="130" viewBox="0 0 70 130"><path d="M32.6 82.2 L32.6 114.8 M17.8 100 L32.6 115 L47.4 100" fill="none" stroke="#2f7de0" stroke-width="9" stroke-linecap="round" stroke-linejoin="round"/><path d="M32.6 82.2 L32.6 114.8 M17.8 100 L32.6 115 L47.4 100" fill="none" stroke="#fff" stroke-width="6" stroke-linecap="round" stroke-linejoin="round"/></svg>
<svg style="position:absolute;left:1495.00px;top:325.00px;overflow:visible;" width="75" height="75" viewBox="0 0 75 75"><path d="M15.5 34.8 L15.5 15.6 A6.1 6.1 0 0 1 27.7 15.6 L27.7 11.65 A6.05 6.05 0 0 1 39.8 11.65 L39.8 16.25 A6.25 6.25 0 0 1 52.3 16.25 L52.3 20.25 A6.25 6.25 0 0 1 64.8 20.25 L64.8 46 C64.8 60 53 69.7 36.5 69.7 C30 69.7 25.5 67.5 21.5 63.5 L10.5 52.5 C8.5 50.5 7.6 48.5 7.6 45 L7.6 39 C7.6 33 10.5 28.5 15.5 26" fill="#fff" stroke="#000" stroke-width="3.8" stroke-linecap="round" stroke-linejoin="round"/><path d="M27.7 15.6 L27.7 22.3 M39.8 11.65 L39.8 22.7 M52.3 16.25 L52.3 22.3" stroke="#000" stroke-width="3.8" stroke-linecap="round"/></svg>
<div style="position:absolute;left:407.30px;top:24.80px;width:31.30px;height:28.40px;background:#f6f6f6;border-radius:7px;box-shadow:0 0 7px 2px rgba(255,255,255,0.7)"></div>
<svg style="position:absolute;left:407.00px;top:24.00px;overflow:visible;" width="32" height="30" viewBox="0 0 32 30"><rect x="6" y="6" width="5.2" height="14.2" fill="#444"/><rect x="12.2" y="6" width="5.4" height="14.2" fill="#444"/><rect x="19.4" y="6" width="5.2" height="8.6" fill="#444"/><circle cx="22.5" cy="21.8" r="6.6" fill="#f6f6f6"/><g transform="translate(22.5,21.8)"><circle r="4" fill="#444"/><rect x="-1.25" y="-5.6" width="2.5" height="3" transform="rotate(0)" fill="#444"/><rect x="-1.25" y="-5.6" width="2.5" height="3" transform="rotate(60)" fill="#444"/><rect x="-1.25" y="-5.6" width="2.5" height="3" transform="rotate(120)" fill="#444"/><rect x="-1.25" y="-5.6" width="2.5" height="3" transform="rotate(180)" fill="#444"/><rect x="-1.25" y="-5.6" width="2.5" height="3" transform="rotate(240)" fill="#444"/><rect x="-1.25" y="-5.6" width="2.5" height="3" transform="rotate(300)" fill="#444"/><circle r="1.8" fill="#f6f6f6"/></g></svg>
<svg style="position:absolute;left:380.00px;top:50.00px;overflow:visible;" width="88" height="130" viewBox="0 0 88 130"><path d="M42.7 2.9 L80.6 43.2 Q83.2 47.6 78.4 47.7 L65 47.7 L65 124 Q65 127.1 62 127.1 L25.3 127.1 Q22.3 127.1 22.3 124 L22.3 47.7 L9.2 47.7 Q4.4 47.6 6.9 43.2 Z" fill="#f04b2f" stroke="#d8391f" stroke-width="0.8"/></svg>
<svg style="position:absolute;left:808.00px;top:388.00px;overflow:visible;" width="135" height="82" viewBox="0 0 135 82"><path d="M129.3 41.4 L87 4.4 Q84.4 3.2 84.4 6 L84.4 19.6 L7 19.6 Q4 19.6 4 22.6 L4 59 Q4 62 7 62 L84.4 62 L84.4 75 Q84.4 78.2 87 77 Z" fill="#f04b2f" stroke="#d8391f" stroke-width="0.8"/></svg>
</body></html>
